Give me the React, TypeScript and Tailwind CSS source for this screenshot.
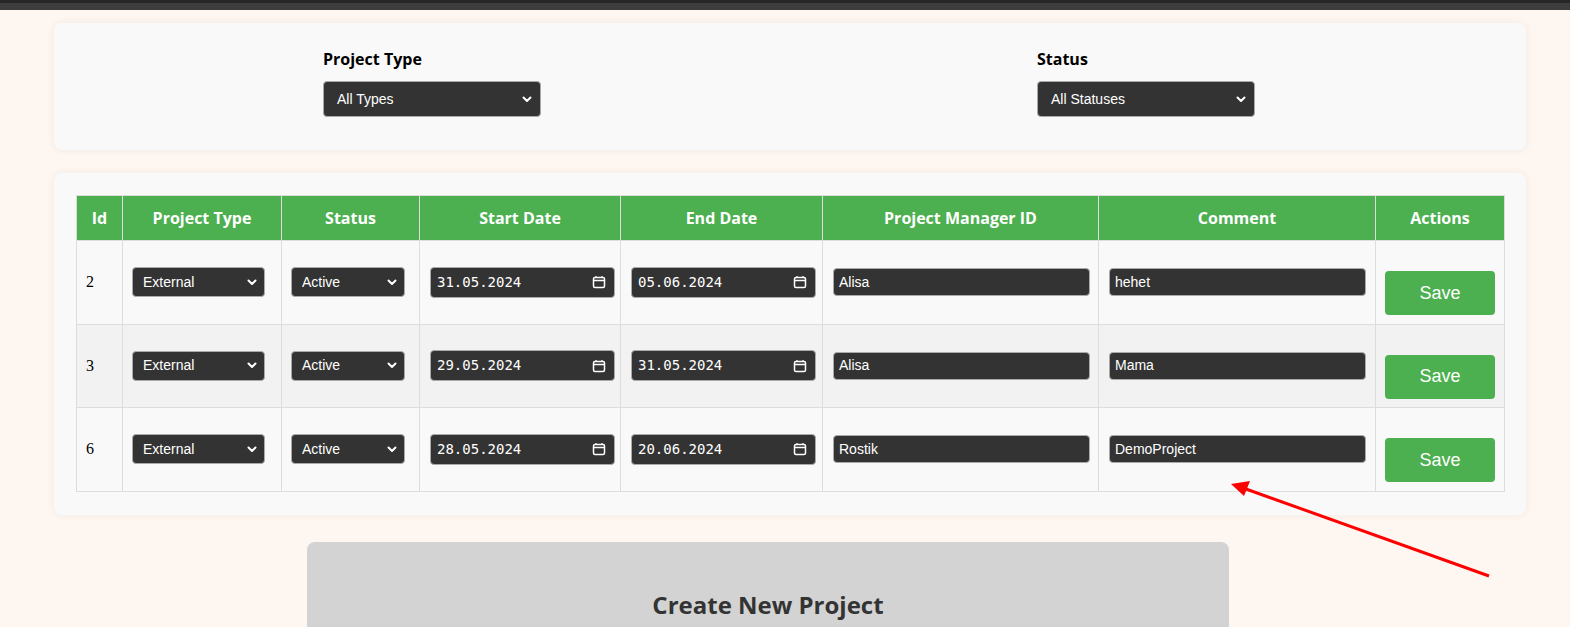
import React from 'react';

type Row = {
  id: number;
  type: string;
  status: string;
  start: string;
  end: string;
  manager: string;
  comment: string;
};

const rows: Row[] = [
  { id: 2, type: 'External', status: 'Active', start: '31.05.2024', end: '05.06.2024', manager: 'Alisa', comment: 'hehet' },
  { id: 3, type: 'External', status: 'Active', start: '29.05.2024', end: '31.05.2024', manager: 'Alisa', comment: 'Mama' },
  { id: 6, type: 'External', status: 'Active', start: '28.05.2024', end: '20.06.2024', manager: 'Rostik', comment: 'DemoProject' },
];

const Chevron = () => (
  <svg width="10" height="7" viewBox="0 0 10 7" className="shrink-0">
    <path d="M1.5 1.5 L5 5 L8.5 1.5" fill="none" stroke="white" strokeWidth="2" strokeLinecap="round" strokeLinejoin="round" />
  </svg>
);

const CalendarIcon = () => (
  <svg width="14" height="14" viewBox="0 0 14 14" className="shrink-0">
    <rect x="1.5" y="2.5" width="11" height="10" rx="1.5" fill="none" stroke="white" strokeWidth="1.5" />
    <line x1="1.5" y1="5.5" x2="12.5" y2="5.5" stroke="white" strokeWidth="1.5" />
    <line x1="4" y1="1" x2="4" y2="3" stroke="white" strokeWidth="1.2" />
    <line x1="10" y1="1" x2="10" y2="3" stroke="white" strokeWidth="1.2" />
  </svg>
);

const DarkSelect: React.FC<{ value: string; className: string }> = ({ value, className }) => (
  <div
    className={`flex items-center justify-between bg-[#333] border border-[#aaa] rounded-[4px] text-white text-[14px] font-['Liberation_Sans',Arial,sans-serif] ${className}`}
  >
    <span>{value}</span>
    <Chevron />
  </div>
);

const DateField: React.FC<{ value: string }> = ({ value }) => (
  <div className="flex items-center justify-between w-[185px] h-[31px] pl-[6px] pr-[8px] bg-[#333] border border-[#aaa] rounded-[4px] text-white text-[14px] font-['DejaVu_Sans_Mono',monospace]">
    <span>{value}</span>
    <CalendarIcon />
  </div>
);

const TextField: React.FC<{ value: string }> = ({ value }) => (
  <div className="flex items-center w-[257px] h-[28px] px-[5px] bg-[#333] border border-[#aaa] rounded-[4px] text-white text-[14px] font-['Liberation_Sans',Arial,sans-serif]">
    {value}
  </div>
);

const headers = ['Id', 'Project Type', 'Status', 'Start Date', 'End Date', 'Project Manager ID', 'Comment', 'Actions'];

export default function App() {
  return (
    <div className="relative w-[1570px] h-[627px] bg-[#fef7f1] font-['Open_Sans',sans-serif] overflow-hidden">
      {/* top bar */}
      <div className="h-[3px] bg-[#262626]" />
      <div className="h-[7px] bg-[#3d3d3d]" />

      <div className="pl-[54px] pt-[13px]">
        {/* Filters */}
        <div className="w-[1472px] bg-[#f9f9f9] rounded-[8px] shadow-[0_0_8px_rgba(0,0,0,0.06)] h-[127px] pl-[269px] pt-[24px] flex gap-[496px]">
          <div className="w-[218px] flex flex-col">
            <label className="text-[16px] leading-[24px] font-bold text-black mb-[10px]">Project Type</label>
            <DarkSelect value="All Types" className="w-[218px] h-[36px] pl-[13px] pr-[8px]" />
          </div>
          <div className="w-[218px] flex flex-col">
            <label className="text-[16px] leading-[24px] font-bold text-black mb-[10px]">Status</label>
            <DarkSelect value="All Statuses" className="w-[218px] h-[36px] pl-[13px] pr-[8px]" />
          </div>
        </div>

        {/* Table */}
        <div className="w-[1472px] mt-[23px] bg-[#f9f9f9] rounded-[8px] shadow-[0_0_8px_rgba(0,0,0,0.06)] pt-[22px] px-[22px] pb-[23px]">
          <table className="w-[1428px] table-fixed border-collapse">
            <colgroup>
              <col className="w-[46px]" />
              <col className="w-[159px]" />
              <col className="w-[138px]" />
              <col className="w-[201px]" />
              <col className="w-[202px]" />
              <col className="w-[276px]" />
              <col className="w-[277px]" />
              <col className="w-[129px]" />
            </colgroup>
            <thead>
              <tr className="bg-[#4caf50] h-[45px]">
                {headers.map((h) => (
                  <th key={h} className="border border-[#ddd] text-white text-[16px] font-bold text-center align-middle">
                    {h}
                  </th>
                ))}
              </tr>
            </thead>
            <tbody>
              {rows.map((r, i) => (
                <tr key={r.id} className={`h-[83.5px] ${i % 2 === 1 ? 'bg-[#f2f2f2]' : 'bg-[#f9f9f9]'}`}>
                  <td className="border border-[#ddd] pl-[9px] text-[16px] text-black font-['Liberation_Serif',serif] align-middle">
                    {r.id}
                  </td>
                  <td className="border border-[#ddd] pl-[9px] align-middle">
                    <DarkSelect value={r.type} className="w-[133px] h-[30px] pl-[10px] pr-[7px]" />
                  </td>
                  <td className="border border-[#ddd] pl-[9px] align-middle">
                    <DarkSelect value={r.status} className="w-[114px] h-[30px] pl-[10px] pr-[7px]" />
                  </td>
                  <td className="border border-[#ddd] pl-[10px] align-middle">
                    <DateField value={r.start} />
                  </td>
                  <td className="border border-[#ddd] pl-[10px] align-middle">
                    <DateField value={r.end} />
                  </td>
                  <td className="border border-[#ddd] pl-[10px] align-middle">
                    <TextField value={r.manager} />
                  </td>
                  <td className="border border-[#ddd] pl-[10px] align-middle">
                    <TextField value={r.comment} />
                  </td>
                  <td className="border border-[#ddd] pl-[9px] align-middle">
                    <button className="mt-[20px] mb-[-2px] w-[110px] h-[44px] bg-[#4caf50] rounded-[4px] text-white text-[18px] font-['Liberation_Sans',Arial,sans-serif]">
                      Save
                    </button>
                  </td>
                </tr>
              ))}
            </tbody>
          </table>
        </div>

        {/* Create new project */}
        <div className="mt-[27px] ml-[253px] w-[922px] h-[120px] bg-[#d3d3d3] rounded-t-[8px] pt-[45px] text-center">
          <h2 className="text-[24px] font-bold text-[#333]">Create New Project</h2>
        </div>
      </div>

      {/* annotation arrow */}
      <svg className="absolute left-0 top-0 pointer-events-none" width="1570" height="627">
        <line x1="1489" y1="576" x2="1246" y2="489" stroke="#ff0000" strokeWidth="3" />
        <polygon points="1231,484 1250,481 1244,496" fill="#ff0000" />
      </svg>
    </div>
  );
}
